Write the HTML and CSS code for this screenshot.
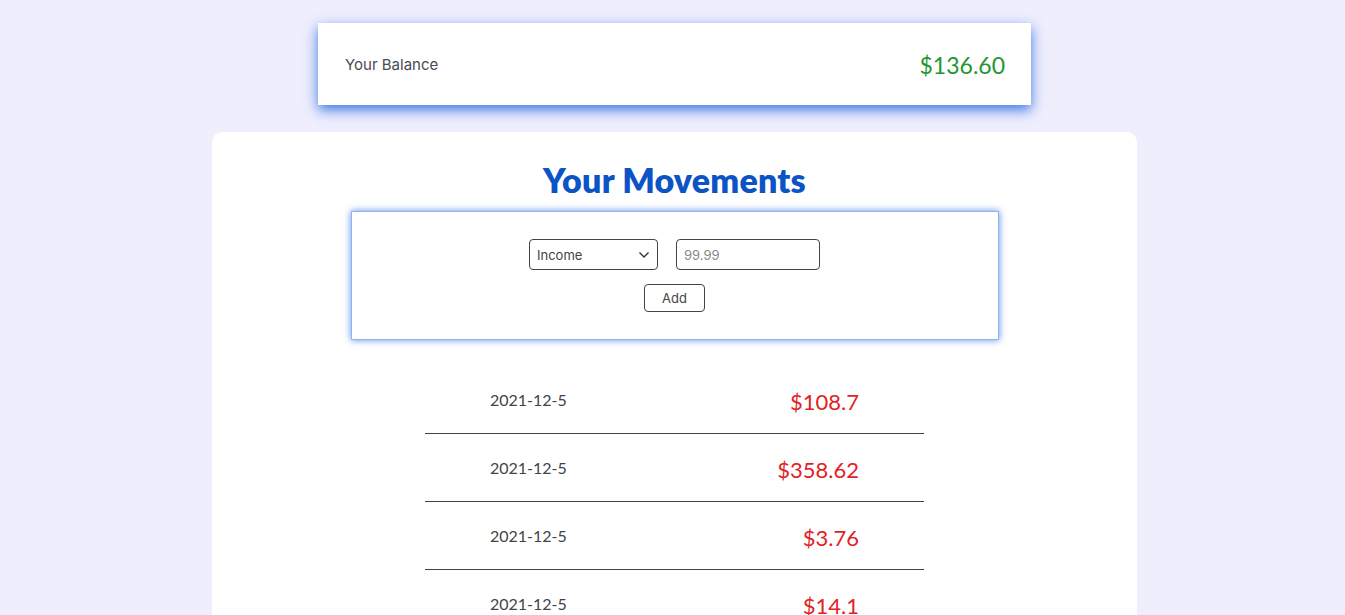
FILE: index.html
```html
<!DOCTYPE html>
<html lang="en">
<head>
<meta charset="utf-8">
<title>Budget</title>
<link rel="stylesheet" href="styles.css">
</head>
<body>
  <div class="page">
    <section class="balance-card">
      <span class="balance-label">Your Balance</span>
      <span class="balance-value">$136.60</span>
    </section>
    <main class="movements">
      <h1 class="movements-title">Your Movements</h1>
      <form class="entry-form">
        <div class="entry-fields">
          <div class="select-wrap">
            <select class="type-select">
              <option>Income</option>
              <option>Expense</option>
            </select>
            <svg class="chevron" width="12" height="8" viewBox="0 0 12 8"><path d="M1.5 1.5 L6 6 L10.5 1.5" fill="none" stroke="#333" stroke-width="1.4"/></svg>
          </div>
          <input class="amount-input" type="text" placeholder="99.99">
        </div>
        <button class="add-btn" type="button">Add</button>
      </form>
      <ul class="movement-list">
        <li class="movement-row"><span class="movement-date">2021-12-5</span><span class="movement-amount">$108.7</span></li>
        <li class="movement-row"><span class="movement-date">2021-12-5</span><span class="movement-amount">$358.62</span></li>
        <li class="movement-row"><span class="movement-date">2021-12-5</span><span class="movement-amount">$3.76</span></li>
        <li class="movement-row"><span class="movement-date">2021-12-5</span><span class="movement-amount">$14.1</span></li>
      </ul>
    </main>
  </div>
</body>
</html>
```

FILE: styles.css
```css
* { box-sizing: border-box; }
html, body { margin: 0; padding: 0; }
body {
  background: #eeeefd;
  font-family: "Inter", "Liberation Sans", sans-serif;
  color: #444;
  overflow: hidden;
  height: 615px;
}
.page {
  display: flex;
  flex-direction: column;
  align-items: center;
  padding-top: 23px;
  padding-left: 4px;
}
.balance-card {
  width: 713px;
  height: 82px;
  background: #fff;
  display: flex;
  align-items: center;
  justify-content: space-between;
  padding: 0 26px 0 27px;
  box-shadow: 0 5px 12px rgba(30, 100, 225, 0.85);
}
.balance-label {
  font-size: 15px;
  color: #4a4a55;
}
.balance-value {
  font-family: "Lato", "Liberation Sans", sans-serif;
  font-size: 23px;
  color: #23962f;
  padding-top: 2px;
}
.movements {
  margin-top: 27px;
  width: 925px;
  background: #fff;
  border-radius: 10px;
  display: flex;
  flex-direction: column;
  align-items: center;
  padding-top: 28px;
  min-height: 600px;
}
.movements-title {
  margin: 0;
  font-family: "Lato", "Liberation Sans", sans-serif;
  font-weight: 800;
  font-size: 34px;
  line-height: 40px;
  color: #0b54c5;
  letter-spacing: 0.2px;
}
.entry-form {
  margin-top: 11px;
  width: 648px;
  height: 129px;
  border: 1px solid #8fb4ef;
  box-shadow: 0 0 7px rgba(30, 100, 225, 0.75);
  display: flex;
  flex-direction: column;
  align-items: center;
  padding-top: 27px;
  gap: 14px;
}
.entry-fields {
  display: flex;
  gap: 18px;
}
.select-wrap {
  position: relative;
  width: 129px;
  height: 31px;
}
.type-select {
  appearance: none;
  -webkit-appearance: none;
  width: 100%;
  height: 100%;
  border: 1px solid #444;
  border-radius: 4px;
  background: #fff;
  font-family: "Inter", "Liberation Sans", sans-serif;
  font-size: 13px;
  color: #444;
  padding: 0 0 0 7px;
}
.chevron {
  position: absolute;
  right: 8px;
  top: 12px;
  pointer-events: none;
}
.amount-input {
  width: 144px;
  height: 31px;
  border: 1px solid #444;
  border-radius: 4px;
  font-family: "Inter", "Liberation Sans", sans-serif;
  font-size: 13px;
  padding: 0 7px;
}
.amount-input::placeholder { color: #888; }
.add-btn {
  width: 61px;
  height: 28px;
  border: 1px solid #444;
  border-radius: 4px;
  background: #fff;
  font-family: "Inter", "Liberation Sans", sans-serif;
  font-size: 13px;
  color: #444;
  padding: 0;
}
.movement-list {
  list-style: none;
  margin: 26px 0 0;
  padding: 0;
  width: 499px;
}
.movement-row {
  height: 68px;
  display: flex;
  align-items: center;
  justify-content: space-between;
  padding: 0 65px;
  border-bottom: 1px solid #444;
}
.movement-date {
  font-family: "Lato", "Liberation Sans", sans-serif;
  font-size: 16px;
  color: #444;
}
.movement-amount {
  font-family: "Lato", "Liberation Sans", sans-serif;
  font-size: 22px;
  color: #e2221f;
  padding-top: 3px;
}
```
